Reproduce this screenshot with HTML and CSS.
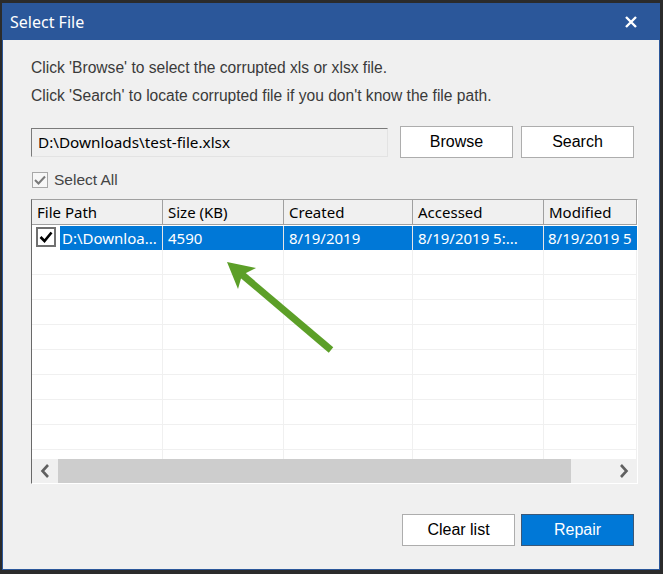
FILE: index.html
```html
<!DOCTYPE html>
<html lang="en">
<head>
  <meta charset="UTF-8">
  <title>Select File</title>
  <link rel="stylesheet" href="styles.css">
</head>
<body>
  <div class="window">
    <div class="titlebar">
      <span class="title">Select File</span>
      <svg class="close" width="12" height="12" viewBox="0 0 12 12">
        <path d="M1 1 L11 11 M11 1 L1 11" stroke="#fff" stroke-width="2.4"/>
      </svg>
    </div>

    <div class="content">
      <p class="hint">Click 'Browse' to select the corrupted xls or xlsx file.</p>
      <p class="hint">Click 'Search' to locate corrupted file if you don't know the file path.</p>

      <div class="path-row">
        <div class="path-box">D:\Downloads\test-file.xlsx</div>
        <button class="btn browse">Browse</button>
        <button class="btn">Search</button>
      </div>

      <div class="select-all">
        <span class="check-small">
          <svg width="12" height="10" viewBox="0 0 12 10"><path d="M1 5 L4.5 8.5 L11 1.5" fill="none" stroke="#7a7a7a" stroke-width="2"/></svg>
        </span>
        <span>Select All</span>
      </div>

      <div class="list">
        <div class="list-head">
          <div class="cell">File Path</div>
          <div class="cell">Size (KB)</div>
          <div class="cell">Created</div>
          <div class="cell">Accessed</div>
          <div class="cell">Modified</div>
        </div>
        <div class="list-body">
          <div class="row selected">
            <div class="cell first">
              <span class="check-row">
                <svg width="14" height="12" viewBox="0 0 14 12"><path d="M1.5 6 L5.5 10 L12.5 1.5" fill="none" stroke="#000" stroke-width="2.6"/></svg>
              </span>
              <span class="name">D:\Downloa...</span>
            </div>
            <div class="cell">4590</div>
            <div class="cell">8/19/2019</div>
            <div class="cell">8/19/2019 5:...</div>
            <div class="cell">8/19/2019 5</div>
          </div>
          <div class="row"><div class="cell"></div><div class="cell"></div><div class="cell"></div><div class="cell"></div><div class="cell"></div></div>
          <div class="row"><div class="cell"></div><div class="cell"></div><div class="cell"></div><div class="cell"></div><div class="cell"></div></div>
          <div class="row"><div class="cell"></div><div class="cell"></div><div class="cell"></div><div class="cell"></div><div class="cell"></div></div>
          <div class="row"><div class="cell"></div><div class="cell"></div><div class="cell"></div><div class="cell"></div><div class="cell"></div></div>
          <div class="row"><div class="cell"></div><div class="cell"></div><div class="cell"></div><div class="cell"></div><div class="cell"></div></div>
          <div class="row"><div class="cell"></div><div class="cell"></div><div class="cell"></div><div class="cell"></div><div class="cell"></div></div>
          <div class="row"><div class="cell"></div><div class="cell"></div><div class="cell"></div><div class="cell"></div><div class="cell"></div></div>
          <div class="row"><div class="cell"></div><div class="cell"></div><div class="cell"></div><div class="cell"></div><div class="cell"></div></div>
          <div class="row"><div class="cell"></div><div class="cell"></div><div class="cell"></div><div class="cell"></div><div class="cell"></div></div>
        </div>
        <div class="hscroll">
          <div class="arrow">
            <svg width="10" height="14" viewBox="0 0 10 14"><path d="M8 1 L2.5 7 L8 13" fill="none" stroke="#606060" stroke-width="2.6"/></svg>
          </div>
          <div class="thumb"></div>
          <div class="track"></div>
          <div class="arrow">
            <svg width="10" height="14" viewBox="0 0 10 14"><path d="M2 1 L7.5 7 L2 13" fill="none" stroke="#606060" stroke-width="2.6"/></svg>
          </div>
        </div>

        <!-- green pointer drawn over the list -->
        <svg class="pointer" width="112" height="96" viewBox="0 0 112 96">
          <line x1="108" y1="92" x2="16" y2="14" stroke="#5c9f28" stroke-width="7"/>
          <polygon points="4,4 33,10 19,17 15,31" fill="#5c9f28"/>
        </svg>
      </div>

      <div class="actions">
        <button class="btn">Clear list</button>
        <button class="btn primary">Repair</button>
      </div>
    </div>
  </div>
</body>
</html>
```

FILE: styles.css
```css
body {
  margin: 0;
  background-color: #2b2b2b;
  font-family: "Liberation Sans", Arial, sans-serif;
}

.window {
  width: 656px;
  height: 565px;
  margin: 3px 0 0 2px;
  border: 1px solid #2b579a;
  background-color: #f0f0f0;
  display: flex;
  flex-direction: column;
}

.titlebar {
  height: 36px;
  background-color: #2b579a;
  display: flex;
  align-items: center;
  justify-content: space-between;
  padding: 0 22px 0 7px;
}

.title {
  color: #fff;
  font-family: "Noto Sans", sans-serif;
  font-size: 16px;
  margin-top: -1px;
}

.content {
  padding: 14px 25px 0 28px;
}

.hint {
  margin: 0;
  font-size: 15.6px;
  line-height: 28px;
  color: #3a3a3a;
}

.path-row {
  display: flex;
  align-items: center;
  margin-top: 16px;
  height: 32px;
}

.path-box {
  width: 349px;
  height: 27px;
  border: 1px solid #e3e3e3;
  border-top-color: #7a7a7a;
  border-left-color: #7a7a7a;
  padding-left: 6px;
  font-family: "Noto Sans", sans-serif;
  font-size: 15.3px;
  line-height: 26px;
  color: #000;
}

.btn {
  width: 113px;
  height: 32px;
  background-color: #fff;
  border: 1px solid #adadad;
  font-family: "Liberation Sans", Arial, sans-serif;
  font-size: 16px;
  color: #000;
  padding: 0;
}

.browse {
  margin-left: 12px;
  margin-right: 8px;
}

.select-all {
  display: flex;
  align-items: center;
  margin-top: 14px;
  height: 16px;
  font-size: 15.5px;
  color: #444;
}

.check-small {
  width: 14px;
  height: 14px;
  margin-left: 1px;
  margin-right: 6px;
  border: 1px solid #a8a8a8;
  background-color: #f7f7f7;
  display: flex;
  align-items: center;
  justify-content: center;
}

.list {
  position: relative;
  width: 605px;
  height: 283px;
  margin-top: 11px;
  border: 1px solid #fff;
  border-top-color: #a0a0a0;
  border-left-color: #696969;
  background-color: #fff;
  overflow: hidden;
  font-family: "Noto Sans", sans-serif;
  font-size: 15px;
}

.list-head,
.row {
  display: grid;
  grid-template-columns: 131px 121px 129px 131px 93px;
}

.list-head {
  height: 24px;
  background-color: #f0f0f0;
  border-bottom: 1px solid #a0a0a0;
}

.list-head .cell {
  border-right: 1px solid #a0a0a0;
  padding-left: 5px;
  line-height: 24px;
  color: #000;
  white-space: nowrap;
}

.list-body {
  height: 234px;
  overflow: hidden;
}

.row {
  height: 25px;
  box-sizing: border-box;
  border-bottom: 1px solid #f0f0f0;
}

.row .cell {
  border-right: 1px solid #f0f0f0;
  white-space: nowrap;
  overflow: hidden;
}

.row.selected {
  margin-top: 1px;
  height: 24px;
  border-bottom: 0;
}

.row.selected .cell {
  background-color: #0078d7;
  color: #fff;
  line-height: 24px;
  padding-left: 5px;
  border-right-color: #e6e6e6;
}

.row.selected .cell:last-child {
  border-right: 0;
  padding-left: 4px;
}

.row.selected .cell.first {
  display: flex;
  padding-left: 0;
  background-color: #fff;
}

.check-row {
  width: 16px;
  height: 16px;
  margin: 1px 4px 0 4px;
  border: 2px solid #707070;
  background-color: #fff;
  display: flex;
  align-items: center;
  justify-content: center;
}

.name {
  flex: 1;
  background-color: #0078d7;
  padding-left: 2px;
}

.hscroll {
  display: flex;
  height: 24px;
  background-color: #f0f0f0;
}

.arrow {
  width: 26px;
  display: flex;
  align-items: center;
  justify-content: center;
}

.thumb {
  width: 513px;
  background-color: #cdcdcd;
}

.track {
  flex: 1;
}

.pointer {
  position: absolute;
  left: 191px;
  top: 58px;
}

.actions {
  display: flex;
  justify-content: flex-end;
  gap: 6px;
  margin-top: 30px;
}

.primary {
  background-color: #0078d7;
  border-color: #3b5878;
  color: #fff;
}
```
